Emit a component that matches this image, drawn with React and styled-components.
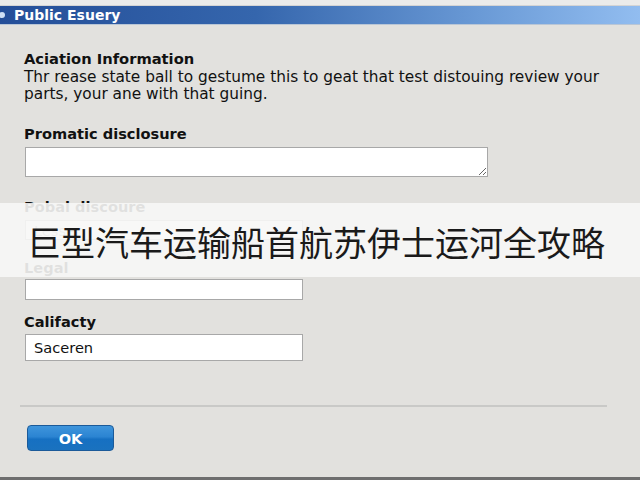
import React from 'react';
import styled, { createGlobalStyle } from 'styled-components';

const GlobalStyle = createGlobalStyle`
  html, body {
    margin: 0;
    padding: 0;
    width: 640px;
    height: 480px;
    overflow: hidden;
    background: #e2e1de;
  }
  * { box-sizing: border-box; }
`;

const Window = styled.div`
  position: relative;
  width: 640px;
  height: 480px;
  display: flex;
  flex-direction: column;
  font-family: 'DejaVu Sans', Verdana, sans-serif;
  color: #111;
  background: #e2e1de;
`;

const TopStrip = styled.div`
  height: 6px;
  background: #ebebea;
  border-bottom: 1px solid #d4d4d4;
`;

const TitleBar = styled.div`
  height: 19px;
  display: flex;
  align-items: center;
  gap: 6px;
  background: linear-gradient(90deg, #244e98 0%, #3566ad 40%, #6a9ad6 75%, #92bdf0 100%);
  color: #fff;
  font-weight: bold;
  font-size: 14px;
  border-bottom: 1px solid #b9c6d6;
`;

const TitleIcon = styled.svg`
  width: 8px;
  height: 12px;
`;

const Body = styled.div`
  flex: 1;
  display: flex;
  flex-direction: column;
  padding: 25px 20px 0 24px;
`;

const Heading = styled.div`
  font-weight: bold;
  font-size: 14.7px;
  line-height: 17px;
`;

const Paragraph = styled.p`
  margin: 2px 0 0;
  font-size: 15.35px;
  line-height: 17px;
  white-space: nowrap;
`;

const Field = styled.div`
  display: flex;
  flex-direction: column;
  margin-top: ${p => p.$top}px;
`;

const Label = styled.label`
  font-weight: bold;
  font-size: 14.6px;
  line-height: 17px;
  margin-bottom: ${p => p.$gap}px;
`;

const TextArea = styled.textarea`
  margin-left: 1px;
  width: 463px;
  height: 30px;
  resize: both;
  border: 1px solid #a8a8a8;
  background: #fff;
  font-family: inherit;
`;

const Input = styled.input`
  margin-left: 1px;
  width: 278px;
  height: ${p => p.$h}px;
  border: 1px solid #a8a8a8;
  background: #fff;
  font-family: inherit;
  font-size: 14.6px;
  color: #111;
  padding: 0 8px;
  &::placeholder { color: #999; }
`;

const Divider = styled.hr`
  margin: 44px 0 0 -4px;
  width: 587px;
  border: none;
  border-top: 2px solid #c9c9c7;
`;

const OkButton = styled.button`
  margin: 18px 0 0 3px;
  width: 87px;
  height: 26px;
  border: 1px solid #1b5a99;
  border-radius: 4px;
  background: linear-gradient(180deg, #3f95dc 0%, #2b84d2 45%, #1670c2 55%, #1a72bf 100%);
  color: #fff;
  font-family: inherit;
  font-weight: bold;
  font-size: 14.6px;
`;

const BottomStrip = styled.div`
  height: 3px;
  background: #6e6e6e;
`;

const Banner = styled.div`
  position: absolute;
  left: 0;
  top: 203px;
  width: 640px;
  height: 74px;
  display: flex;
  align-items: center;
  padding: 4px 0 0 27px;
  background: rgba(247, 247, 246, 0.9);
  font-family: 'Noto Sans CJK SC', sans-serif;
  font-size: 34px;
  line-height: 40px;
  color: #1a1a1a;
`;

export default function App() {
  return (
    <>
      <GlobalStyle />
      <Window>
        <TopStrip />
        <TitleBar>
          <TitleIcon viewBox="0 0 8 12">
            <circle cx="2" cy="6" r="3" fill="#cfe0f5" />
          </TitleIcon>
          Public Esuery
        </TitleBar>
        <Body>
          <Heading>Aciation Information</Heading>
          <Paragraph>
            Thr rease state ball to gestume this to geat that test distouing review your
            <br />
            parts, your ane with that guing.
          </Paragraph>
          <Field $top={22}>
            <Label $gap={5}>Promatic disclosure</Label>
            <TextArea />
          </Field>
          <Field $top={21}>
            <Label $gap={5}>Pobal discoure</Label>
            <Input $h={20} placeholder="Lesser" />
          </Field>
          <Field $top={19}>
            <Label $gap={3}>Legal</Label>
            <Input $h={21} />
          </Field>
          <Field $top={13}>
            <Label $gap={4}>Califacty</Label>
            <Input $h={27} defaultValue="Saceren" />
          </Field>
          <Divider />
          <OkButton>OK</OkButton>
        </Body>
        <BottomStrip />
        <Banner>巨型汽车运输船首航苏伊士运河全攻略</Banner>
      </Window>
    </>
  );
}
